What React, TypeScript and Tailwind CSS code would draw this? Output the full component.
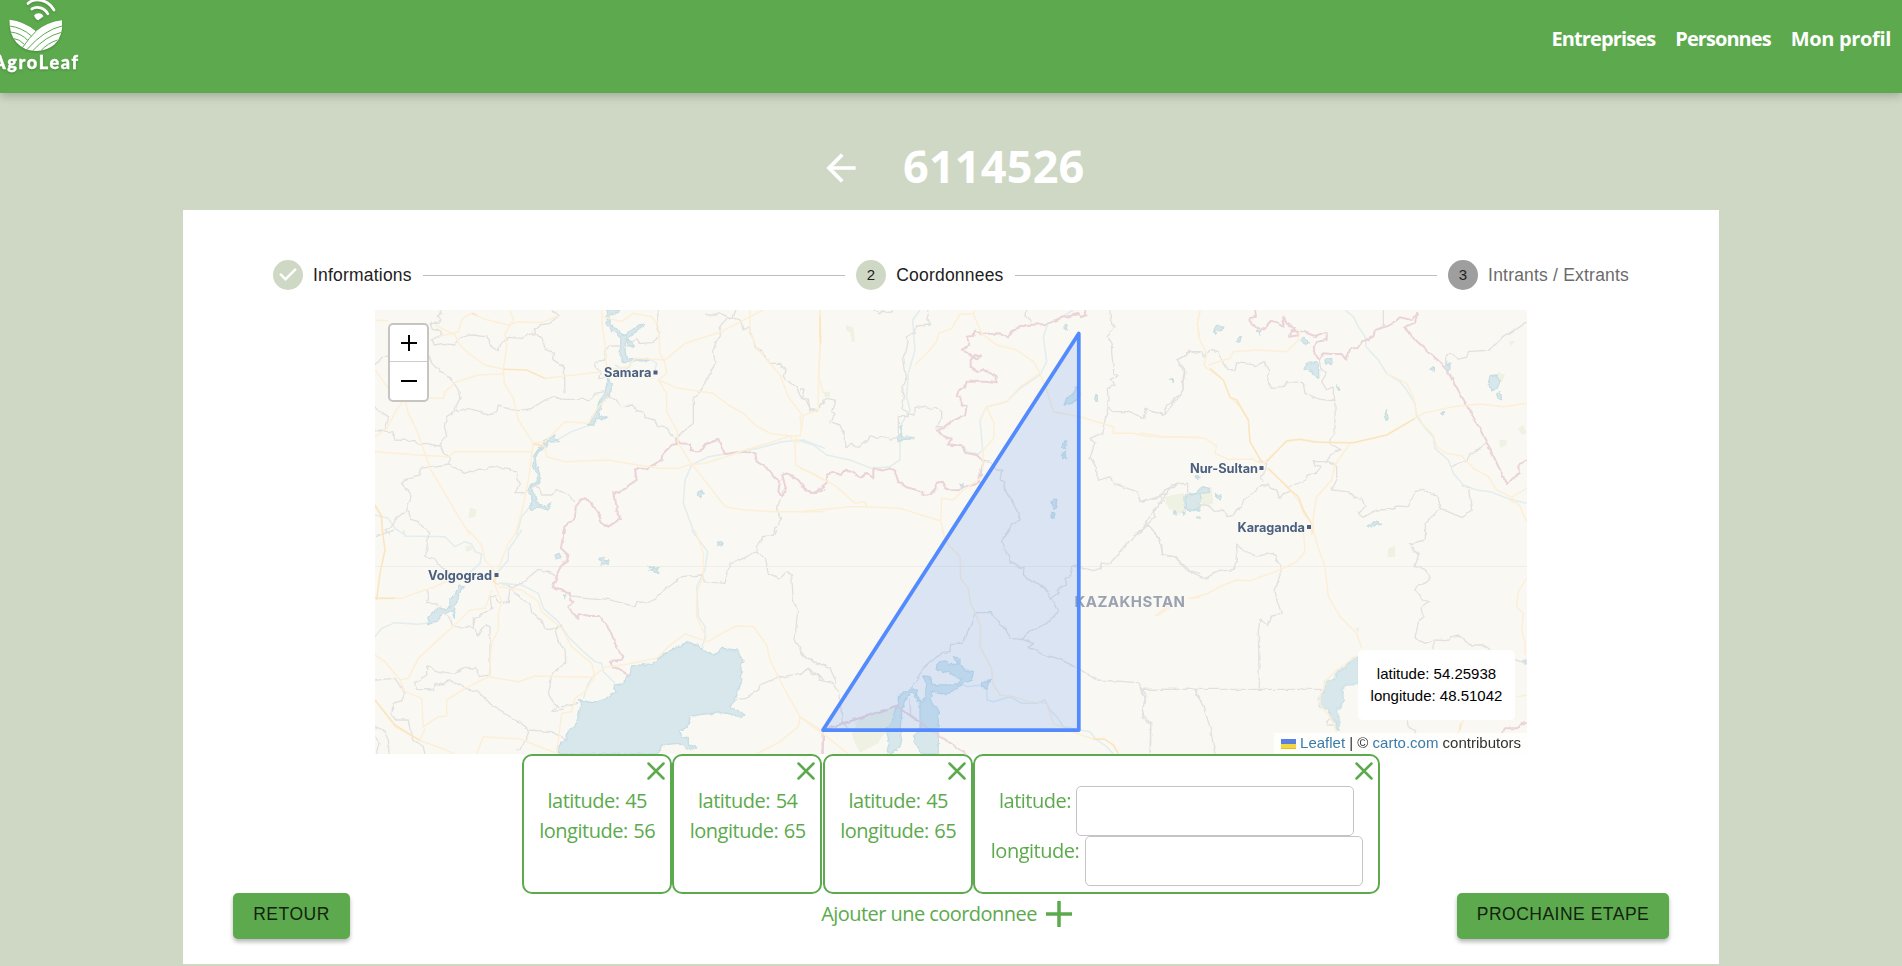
import React from "react";

const ui = "font-['Open_Sans','Noto_Sans',sans-serif]";
const arial = "font-['Liberation_Sans',Arial,sans-serif]";

type Tile = { at: string; borders?: string[]; frontiers?: string[]; roads?: string[]; majors?: string[]; rivers?: string[]; water?: string[]; parks?: string[] };

const tiles: Tile[] = [
  {
    at: "translate(0 0) scale(.33333)",
    borders: [
      "M200 0L190 18 198 30 192 40 165 40 172 58 190 62 200 75 172 90 178 105 205 100 235 105 250 85 278 78 285 72 310 78 335 80 345 105 370 122 380 100 400 82 440 85 465 72 484 72 478 60 495 45 525 40 550 18 530 0",
      "M484 72L502 88 510 118 535 128 533 148 568 172 570 250",
      "M0 165L20 140 45 138M160 140L180 170 228 205 250 240 255 265 240 295 248 305 270 300 280 295 340 312 365 305 370 285 405 298 430 302 470 295 510 270 540 258 570 268 620 268 650 268 660 250 690 245 700 262 720 265 740 290 770 288 785 300 808 308 810 322 840 330 848 350 880 355 895 380",
      "M245 300L215 320 208 350 215 375 195 405 205 430 225 445 225 462 265 490 290 482 330 480 345 470 400 475 425 485 428 505 435 520 420 548 450 548",
      "M0 290L10 305 40 325 30 360 0 362 50 365 60 390 115 392 130 402 155 400 175 405 195 408",
      "M225 462L165 470 140 475 135 495 105 502 80 522 100 540 108 560 95 600 110 628 130 635 165 675M95 600L65 625 50 650 30 660 45 675",
      "M850 0L845 45 855 70 835 98 795 100 785 85 760 108 705 108 690 125 690 150 660 155 665 175 675 185 672 205 690 205 700 180",
      "M995 15L1025 15 1035 10 1070 25 1080 0M1060 20L1095 30 1105 60 1125 50 1125 70 1145 110 1185 160 1215 160 1230 180 1225 200 1265 235 1280 265 1295 272 1305 300 1330 300 1335 285 1350 275",
      "M1060 20L1035 50 1040 70 1025 90 1015 120 1020 160 1000 200 985 235 955 265 955 340 925 365 905 385",
      "M450 548L480 525 495 540 500 555 530 555 545 538 580 555 600 575M1225 540L1215 570 1205 600 1220 625 1200 655 1195 675",
    ],
    frontiers: ["M565 675L568 650 600 625 602 590 620 568 635 565 665 600 680 635 700 650 738 625 725 600 718 545 730 548 770 520 785 510 780 478 815 475 862 450 865 430 890 405 905 402 903 385 912 400 945 402 945 420 975 425 990 402 1030 390 1050 432 1075 428 1110 425 1140 430 1145 455 1185 480 1195 500 1215 510 1210 545 1220 555 1235 545 1222 495 1235 490 1270 510 1285 530 1320 552 1350 535"],
    roads: [
      "M0 30L40 32M180 45L240 75 255 105 280 130 330 165 385 178", "M190 80L250 65 262 25 290 10 330 28 400 45 430 35 500 38 550 18",
      "M405 0L415 30 390 70 395 110 385 178 388 220 415 265 430 330 475 400 510 410 515 440 570 455 700 450 770 462 850 475 910 475 940 465 990 460 1070 435 1110 420 1180 400 1245 378",
      "M165 265L205 265 210 245 245 215 310 195 385 192M510 205L600 195 680 185", "M90 270L70 290 35 355 0 380M90 270L100 310 125 360 150 430 165 475 210 550 250 620 285 675",
      "M0 425L60 430 130 435 220 440 240 425 470 425M475 400L462 500 442 600 420 675", "M475 400L510 395 570 335 640 340 670 290 700 260",
      "M680 0L682 50 690 100 695 180M685 20L740 35 775 10 830 20 850 50 855 130 870 160 875 190 850 210 875 250 875 305 905 360 910 400 945 455 1000 525 1050 590 1110 600 1200 605 1350 605",
      "M695 180L760 170 780 145 870 150 930 100 1040 65 1115 25 1165 0", "M850 210L910 235 1015 250 1060 285 1105 310 1140 345 1185 370 1245 378 1275 378 1285 320 1240 260 1215 195 1145 115 1125 60 1125 0", "M1335 0L1335 90 1332 200 1345 250M1245 378L1255 395 1275 395 1260 385 1262 465 1350 512",
      "M0 180L40 235M0 590L20 620 22 675",
    ],
    majors: ["M385 178L455 180 510 205", "M1335 0L1335 80", "M0 585L18 615 24 675M475 402L510 408M290 10L305 15"],
    rivers: ["M545 390L590 365 645 345", "M490 580L465 590 440 620 425 675", "M950 465L1000 440 1075 428 1150 415 1220 395 1285 390 1350 415", "M950 465L930 510 925 580 940 620 960 675", "M770 150L830 150 845 160 840 180M0 615L40 625 60 655 90 675", "M720 165L745 180 765 170 768 150"],
    water: [
      "M698 0H735L722 12 706 10 705 40 745 78 800 40 808 44 752 88 770 95 778 112 765 108 752 90 750 125 755 145 822 148 820 152 745 155 735 140 738 85 696 45Z",
      "M700 205L713 228 695 270 680 275 672 315 698 326 665 325 655 345 640 345 665 300 675 270 692 240Z",
      "M510 390L530 380 540 375 540 388 553 392 520 393 512 410 490 425 480 445 485 470 494 490 494 520 465 530 480 560 485 580 515 590 525 578 526 590 518 600 490 590 468 600 462 590 476 575 460 540 466 525 490 515 485 490 475 475 475 440 488 420 508 405Z",
      "M968 548L978 542 985 552 978 564 968 560Z",
    ],
    parks: ["M285 592L305 600 300 620 280 625Z"],
  },
  {
    at: "translate(0 220) scale(.33333)",
    borders: [
      "M165 0L160 20 152 80 180 85 190 105 210 120 205 140M155 175L160 190 155 220 190 222 192 235 225 265 235 290 290 292 305 300 308 318 330 285 345 290 345 435",
      "M0 450L60 445 90 490 80 512 55 520 50 550 65 570 100 570 105 598 115 610 115 630 145 650 150 675M0 590L25 600 40 630 42 672M5 675L15 640 0 620M0 20L60 0",
      "M118 458L125 478 178 480 180 460 205 465 225 448 270 475 310 485 350 525 460 595 460 610 440 655 425 660M460 600L530 605 570 628",
      "M345 435L310 440 305 412 290 418 270 410 235 430 195 425 155 410 155 435 120 458", "M295 262L295 290 300 265 350 235 345 200 360 200 370 218 400 215 405 175 440 160 490 118 520 125 545 140",
      "M400 165L420 190 465 225 470 245 500 270 510 295 525 302 560 285 540 300 555 350 570 355 572 400 530 430 525 470 520 490 535 520 550 530 530 545 565 540 560 530 610 520", "M585 198L700 208 780 230 785 218 830 215 860 188 920 140 980 135 985 155 1050 160 1065 100 1075 98 1145 68 1150 40 1165 20 1200 15 1205 0M1145 68L1170 80 1180 130 1215 145 1235 125 1250 135 1255 210 1268 240 1260 325 1280 370 1320 400 1350 408", "M1080 510L1110 505 1150 480 1155 465 1200 445 1275 430 1300 415 1350 450",
      "M1343 600L1343 672",
    ],
    frontiers: ["M566 0L558 55 580 75 575 95 558 105 545 140 533 170 585 192 583 205 595 215 580 230 590 250 608 265 612 250 640 258 675 258 705 300 722 345 745 380 740 390 705 392 715 410 765 438", "M1343 600L1343 675"],
    roads: [
      "M0 205L80 205 120 190 180 170 225 150", "M280 0L320 45 330 90 365 130M430 0L400 40 365 130", "M365 130L360 165 380 215 370 250 370 300 350 340 342 440 430 455 480 438 560 440 650 442 690 412 760 402 845 385 880 350 930 312 1000 335 1040 310 1085 288 1135 290 1175 345 1185 390 1230 480 1275 560 1345 605",
      "M350 180L330 235 285 240 240 285 200 320 130 385 100 445 75 450M370 170L440 180 490 215 500 245 560 295 590 350 650 400 660 440 630 485 600 505 590 545 560 550 545 672", "M0 375L30 395 75 450 90 485 140 505 145 590 190 560 215 558 215 510 270 475 340 440M0 510L60 590 135 632 200 655 240 672M135 632L150 595M305 672L325 620 400 625 440 628 480 645 540 668", "M960 0L985 70 985 140 965 190 965 260 995 325M1275 560L1270 590 1215 635 1145 672",
    ],
    majors: ["M22 0L30 60 15 130 5 210M365 130L355 155 370 165", "M0 510L60 585 135 632", "M0 205L60 205"],
    rivers: ["M85 0L90 18 210 20 240 50 270 35 290 42 300 65 320 72 315 100 265 145", "M0 320L20 295 60 278 130 283 165 278", "M370 160L440 165 490 190 505 235 550 275 580 320 620 360 660 395 680 400 685 425 720 460", "M440 0L400 60 400 90 370 125M660 430L640 460 625 505M950 0L998 65 990 120 965 170 970 260 990 290 990 330 980 350"],
    water: [
      "M250 165L268 170 245 200 250 210 240 225 238 265 232 240 195 258 190 272 158 284 162 262 188 232 215 240 225 228 225 205 240 198Z",
      "M540 75L552 70 558 82 545 87Z", "M672 85L685 85 688 92 702 92 700 100 680 102Z", "M822 110L840 115 852 112 845 120 852 130 825 122 835 118Z", "M1028 32L1045 40 1042 46 1030 42Z", "M563 195L572 198 568 206Z",
      "M550 672L550 650 575 625 580 600 600 590 612 550 620 520 610 508 650 518 690 508 720 485 715 465 740 462 765 435 770 408 830 402 870 370 900 355 935 338 975 348 985 362 1018 375 1040 355 1085 360 1105 395 1098 410 1100 450 1085 500 1065 530 1110 555 1100 562 1050 548 985 552 945 560 940 590 915 602 920 620 940 625 940 645 965 652 950 660 930 650 910 640 860 645 850 672Z",
    ],
    parks: ["M270 50L290 45 292 60 275 65Z", "M375 155L405 158 405 170 385 168Z"],
  },
  {
    at: "translate(425 0) scale(.33333)",
    borders: [
      "M220 0L240 12 250 0 275 10 280 0M385 0L380 20 390 45 350 48 345 70 318 82 325 90 318 125 310 140 320 210 305 240 312 265 305 300 325 310 325 320 295 320 295 385 268 390 265 380 230 385 210 375 205 390 180 412 165 410 155 400 135 410 132 375 120 345 90 335 105 315 95 305 105 270 78 265 60 285 55 300 30 302 25 268 8 262 15 240 0 240",
      "M325 310L345 315 345 292 370 290 395 298 405 290 425 305 425 325 410 350 430 350", "M680 0L678 20 695 35M930 0L932 40 945 50 922 80 935 105 935 130 942 190 955 198 930 208 945 225 922 235 925 290 940 305 985 305 1030 325 1035 298 1090 315 1115 290 1120 270 1150 240 1148 210 1155 180 1135 150 1160 135 1160 125 1200 125", "M925 290L905 370 870 385 885 400 870 440 890 475 892 512 930 500 940 520 1010 545 1020 575 1100 550 1115 525 1160 520M1100 550L1060 605 1065 620 1010 675M1040 635L1065 675",
      "M550 450L575 455 590 480 605 480 600 510 615 515 610 535 640 575 660 630 640 640 615 675",
    ],
    frontiers: ["M0 528L40 552 80 518 82 495 100 488 125 495 135 482 160 485 180 505 200 488 220 505 220 475 250 482 270 475 285 485 295 515 320 532 370 545 370 558 390 555 410 535 410 518 425 515 440 538 475 538 520 525 535 520 540 500 550 455 530 435 495 428 485 408 455 408 445 400 455 388 420 370 412 358 430 355 460 332 495 315 500 290 485 285 485 265 470 258 475 245 495 230 500 215 560 215 590 220 590 200 550 178 535 185 512 170 512 150 525 135 545 140 530 148 495 125 485 122 510 100 500 80 520 78 525 62 550 72 600 70 625 82 635 60 680 45 740 42 780 25 835 12 842 22 860 15 855 0"],
    roads: ["M60 0L62 90 55 200 55 300 0 320 5 360", "M525 0L520 12 480 12 455 55 415 70 410 95 380 130 345 165", "M520 12L545 70 590 105 650 120 700 155 720 190 660 230 620 275 560 290 540 330M560 290L582 340 582 385 550 420 548 480", "M720 190L740 240 760 305 840 320 940 350 940 370 1000 370 1050 380 1200 382", "M0 475L40 490 110 530 165 580 195 575 200 590 150 590 0 605M200 590L300 595 420 632M548 500L490 540 460 570 425 565 422 632M1200 5L1192 40 1200 80M422 632L432 675"],
    majors: ["M60 20L62 100"],
    rivers: ["M360 0L338 30 345 120 325 190 320 260 330 300 305 340 300 400 300 450 270 470 215 475 150 450 80 435 40 405 0 392", "M745 35L730 80 740 155 720 195 660 235 620 275 560 290 540 330 548 420 535 432 500 425 490 410M820 0L790 18 745 40"],
    water: ["M303 345L305 380 342 383 340 387 310 388 295 395 292 378 302 375Z", "M795 45L800 42 802 60 796 62Z", "M835 225L838 260 815 280 792 285 800 265 815 258Z", "M885 262L892 256 892 275 884 276Z", "M1110 208L1120 210 1120 216Z", "M790 395L797 393 798 415 785 415Z", "M785 435L795 422 797 445 788 445Z", "M480 522L488 518 490 528 484 532Z", "M758 568L770 568 768 590 762 598 757 585ZM757 605L766 605 762 625 756 622Z", "M1158 555L1200 548V600L1160 600 1155 580ZM1120 602L1130 605 1128 615ZM538 495L548 494 545 502Z"],
    parks: ["M138 45L160 52 165 95 155 95 152 70 138 60Z", "M70 245H90V262H75Z", "M1115 555L1160 552 1158 595 1130 605 1095 580Z"],
  },
  {
    at: "translate(425 220) scale(.33333)",
    borders: [
      "M630 0L618 15 608 35 615 60 625 75 635 100 660 115 672 110 670 135 690 148 730 170 755 205 775 240 770 250 740 280 690 305 660 330M755 205L775 190 775 175 800 165 795 145 812 140 818 108 850 115 880 122 900 115 905 100 930 98 965 65 990 30 1020 0M1055 0L1070 20 1085 45 1088 75 1125 80 1170 122 1200 130",
      "M0 435L25 415 35 430 55 435 60 450 100 460 115 485 128 570M0 365L40 398 90 415 110 460", "M128 570L145 600M330 480L370 415 425 368 450 365 452 340 490 340 525 248 575 248 600 285 612 290 632 325 665 328 700 340 688 350 725 372 780 388 835 415 890 450 1018 458 1025 490 1035 505 1025 560 1052 585 1050 672M1022 478H1200M1188 480L1200 505M330 510L332 555",
    ],
    frontiers: ["M70 600L290 528 362 578 415 615 500 672M68 600V672"],
    roads: ["M425 0L445 45 480 80 482 145 505 175 512 220 525 248 542 290 540 350 575 415 578 460 600 495 640 500 690 515 740 520 760 580 835 612 885 628 910 625 940 645 955 672", "M0 562L68 610 145 672M1070 258L1110 232M1165 205L1200 202"],
    majors: ["M880 628L915 628 940 645 955 670"],
    rivers: ["M480 458L500 470 545 465 560 480 562 510 580 515 630 500 665 520 710 520 735 510 750 540 770 560 790 590 870 605 890 630 920 650 940 672"],
    water: [
      "M410 405L420 395 440 392 445 405 475 402 465 388 460 380 480 385 480 405 495 420 520 425 515 450 485 462 470 468 475 470 450 488 430 492 395 485 390 510 400 530 415 535 415 672H365L342 635 345 615 360 600 360 515 350 510 345 490 330 490 315 510 305 545 300 600 305 630 300 650 270 670 262 660 268 640 260 600 275 580 285 540 295 520 295 500 312 485 330 480 352 480 350 500 365 515 375 505 380 460 368 438 390 440 392 462 415 465 450 465 475 460 485 450 470 440 450 430 440 425 430 428 412 418Z",
      "M545 462L560 452 575 448 560 460 562 478 545 470Z",
    ],
    parks: ["M165 575L290 530 275 580 260 605 245 620 235 640 180 668 165 640 155 610 168 600Z"],
  },
  {
    at: "translate(765 0) scale(.33333)",
    borders: [
      "M0 325L15 320 15 298 70 315 80 285 110 270 130 240 128 215 135 190 112 150 140 135 145 120 165 130 185 125 195 142 210 118 235 125 245 145 250 165 265 178 285 180 290 155 335 160 345 170 375 158 390 185 382 212 395 232 430 230 440 215 490 218 495 250 540 268 575 272 585 270 585 370 570 390 572 405 605 418 575 430 560 455 520 455 525 465 545 470 530 490 500 495 500 510 450 530 450 545 430 550 420 565 410 540 395 535 385 525 365 525 335 555 310 570 305 595 285 600 280 615 260 620 250 600 225 605 195 585 175 585 150 560M0 575L65 560 70 545 120 520 140 520 140 555 175 580",
      "M540 150L545 175 560 190 545 215 560 240 580 230 580 270M730 0V50M1160 35L1085 85 1050 120 985 125 980 142 955 148 935 132 920 135 920 170M1040 395L1020 420 990 430 985 450 935 470M560 455L590 470 590 510 575 540 625 545 640 560 665 565 675 590 655 612 670 622 710 600 750 598 770 588 805 590 825 545 850 538 870 550 890 555 900 595 965 622 995 600 985 535 965 530M900 600L855 635 858 675M0 672L40 600 75 570M20 640L45 675",
      "M355 455L380 460 375 490 360 500 370 515",
    ],
    frontiers: ["M345 0L348 20 330 25 335 45 355 55 380 55 385 35 405 38 420 45 430 50 430 20 440 40 455 50 470 60 475 75 450 80 455 60 480 62 525 78 560 65 560 90 530 95 520 130 540 150 550 130 575 132 605 132 618 150 630 118 655 110 665 98 700 80 705 62 760 40 780 22 815 30 832 8 825 38 795 50 810 75 915 170 980 285 1040 395 1100 522 1115 505 1140 492 1138 468 1160 450"],
    roads: ["M180 0L172 40 175 80 200 130 192 170M205 165L270 145 280 125 350 120 440 125 475 90 480 60", "M195 170L250 210 270 260 300 290 325 330 330 395 355 440 365 460M0 368L80 382 110 380 195 385 230 408 225 430 265 448 340 448 360 460", "M370 460L440 395 480 388 560 398 640 398 740 375 825 325 850 310 940 290 1020 282 1090 290 1160 280M630 400L585 465 575 510 530 560 520 620 520 675M380 475L440 525 480 580 490 610 515 640 515 675", "M740 190L800 220 820 260 830 310 850 345 880 375 890 410 920 430 965 438 1000 475 1045 500 1070 540 1115 562 1160 535M1115 562L1140 590 1160 635M1110 570L1125 580"],
    majors: ["M210 175L250 210 270 262 290 270 325 330 330 395 365 455", "M380 455L440 392 480 388 520 396 640 398 740 375 825 325", "M385 475L450 540 475 560 490 600 515 640"],
    rivers: ["M615 0L640 20 655 50 675 80 678 110 715 150 740 190 780 215 800 240 825 280 830 320 860 360 880 380 885 415 925 450 940 490 970 525 1010 540 1050 545 1110 568 1160 580"],
    water: ["M222 60L230 45 248 52 245 62 232 62 226 70Z", "M292 98L296 80 303 80 300 95Z", "M350 62L364 60 360 72Z", "M485 88L492 82 505 98 500 104 488 98Z", "M555 150L575 145 575 160 558 162Z", "M492 178L502 160 530 158 536 165 536 205 520 195 512 180Z", "M590 225L600 240 592 240Z", "M733 320L740 302 744 325 738 328Z", "M870 178L880 170 885 180Z", "M918 165L930 162 930 178 920 178Z", "M1045 220L1050 198 1068 195 1080 215 1070 238 1055 240Z", "M1070 252L1080 245 1085 265 1075 268Z", "M902 310L910 308 910 316Z", "M90 208L100 210 98 216Z", "M165 498L180 502 170 506Z", "M135 560L170 550 185 530 208 535 205 548 180 550 185 570 178 590 160 602 138 600ZM225 550L240 558 242 570 230 562ZM102 602L112 612 102 612ZM128 602L135 612 128 612ZM172 622L182 626Z", "M685 648L705 635 722 643 705 645 692 652Z"],
    parks: ["M75 560L130 550 140 600 120 612 85 595Z", "M185 545L215 530 220 580 185 590Z", "M1075 185L1095 195 1085 218 1070 205Z", "M1105 95L1125 92 1115 108Z", "M1135 355L1150 345 1160 370 1145 375Z", "M1078 390L1100 390 1100 405 1080 415Z"],
  },
  {
    at: "translate(765 220) scale(.33333)",
    borders: [
      "M35 0L60 30 68 75 105 80 140 120 195 145 235 125 280 118 292 85 290 45 310 60 335 72 350 78 400 70 420 110 420 135 405 180 410 210 425 250 395 255 385 285 360 270 355 305 358 478M0 478H560M165 480L190 530 210 590 225 672M0 470L18 500 5 550 32 580 32 672",
      "M858 0L855 30 808 42 835 75 825 110 860 120 870 145 850 162 835 165 828 180 850 210 865 218 842 235 852 260 835 280 825 322 855 340 880 330 920 332 935 320 955 315 990 345 1035 345 1050 360 1090 378 1160 400M882 330V360M575 560L560 575 565 585 580 585M800 570L805 590 825 600 830 625",
    ],
    frontiers: ["M1085 612L1095 595 1130 595 1160 578"],
    roads: ["M490 0L495 65 470 95 420 120 330 152 290 150 240 170 200 192 150 205M110 215L80 230 45 258M520 0L530 40 555 110 565 200 600 260 650 310 665 355M655 375L590 420 560 450 540 500 540 525 570 560 590 605M1160 145L1135 185 1130 230 1150 250 1145 300 1155 340 1155 375M1130 500L1160 495M970 570L950 620"],
    majors: ["M515 0L520 5M962 580L960 600"],
    rivers: [],
    water: ["M655 382L635 385 620 410 590 425 582 450 555 455 555 480 540 500 538 528 565 540 575 565 588 575 588 600 597 600 598 570 592 545 612 510 605 480 620 465 655 462Z", "M1148 392L1160 390V405Z"],
    parks: ["M745 55L765 48 765 80 742 82Z", "M645 295L658 292 655 308Z"],
  },
];

const cities: [string, number, number, number, number][] = [
  ["Samara", 229, 67, 47.5, 280.5],
  ["Volgograd", 53, 269.5, 64, 121.5],
  ["Nur-Sultan", 815, 162.5, 68, 886.5],
  ["Karaganda", 862.5, 221.5, 67.5, 934],
];

function MapCanvas() {
  const draw = (list: string[] | undefined, cls: string) => list?.map((d, i) => <path key={cls + i} d={d} className={cls} />);
  return (
    <svg width="1152" height="444" viewBox="0 0 1152 444" className="block">
      <defs>
        <filter id="rough" x="0" y="0" width="1152" height="444" filterUnits="userSpaceOnUse" colorInterpolationFilters="sRGB">
          <feTurbulence type="fractalNoise" baseFrequency=".12" numOctaves="2" seed="4" />
          <feDisplacementMap in="SourceGraphic" scale="4" xChannelSelector="R" yChannelSelector="G" />
        </filter>
        <filter id="coast" x="0" y="0" width="1152" height="444" filterUnits="userSpaceOnUse" colorInterpolationFilters="sRGB">
          <feTurbulence type="fractalNoise" baseFrequency=".2" numOctaves="2" seed="8" />
          <feDisplacementMap in="SourceGraphic" scale="4" xChannelSelector="R" yChannelSelector="G" />
        </filter>
      </defs>
      <rect width="1152" height="444" fill="#faf8f3" />
      <path d="M0 256.5H1152" stroke="#f0eeea" />
      <g fill="none" strokeLinejoin="round">
        {tiles.map((t) => <g key={t.at} transform={t.at}>{draw(t.parks, "fill-[#eff1e3] stroke-none")}</g>)}
        {tiles.map((t) => <g key={t.at} transform={t.at}>{draw(t.rivers, "stroke-[#e1edee] stroke-[4.5px]")}</g>)}
        <g filter="url(#coast)">
          {tiles.map((t) => <g key={t.at} transform={t.at}>{draw(t.water, "fill-[#d7e7eb] stroke-[#c8dee3] stroke-[4px]")}</g>)}
        </g>
        <g filter="url(#rough)">
          {tiles.map((t) => <g key={t.at} transform={t.at}>{draw(t.borders, "stroke-[#e3e1e0] stroke-[4px]")}</g>)}
          {tiles.map((t) => <g key={t.at} transform={t.at}>{draw(t.frontiers, "stroke-[#ead4d8] stroke-[6px]")}</g>)}
        </g>
        {tiles.map((t) => (
          <g key={t.at} transform={t.at}>
            {draw(t.roads, "stroke-[#fcefd8] stroke-[4.5px]")}
            {draw(t.majors, "stroke-[#fae5bf] stroke-[4.5px]")}
          </g>
        ))}
      </g>
      <g className="font-['Inter','Liberation_Sans',sans-serif] font-bold" fill="#4b6080" stroke="#faf8f3" strokeWidth="2" paintOrder="stroke">
        {cities.map(([name, x, y, w, dot]) => (
          <g key={name}>
            <text x={x} y={y} fontSize="12.8" textLength={w}>{name}</text>
            <rect x={dot - 2} y={y - 6.5} width="4" height="4" stroke="none" />
          </g>
        ))}
        <text x="699.5" y="297" fontSize="15" textLength="110.5" fill="#99a2b1">KAZAKHSTAN</text>
      </g>
      <path d="M703.8 23.5V420H448Z" fill="#3a80f5" fillOpacity=".17" stroke="#538bff" strokeWidth="3.75" strokeLinejoin="round" />
    </svg>
  );
}

function Logo() {
  return (
    <svg width="90" height="80" viewBox="0 0 90 80" className="block drop-shadow-[0_1px_1px_rgba(0,0,0,0.2)]">
      <g fill="none" stroke="#fff" strokeWidth="2.7" strokeLinecap="round">
        <path d="M28 3.5C35-3 48-.5 54 10" />
        <path d="M31.8 9C37 5.800 44.500 7.500 47.800 13.800" />
      </g>
      <path d="M34 15.500C37 12 42.500 13 43.300 16.500L38.300 20.300Q35.500 19.500 34 15.500Z" fill="#fff" />
      <path d="M9.500 19.800Q24 21.500 36 31.200 47 22 62 20.200 63.500 36 54.500 44.500 46 51.500 35 51 24 50.500 16.500 42.500 9 34 9.500 19.800Z" fill="#fff" />
      <g fill="none" stroke="#5caa4d" strokeWidth="1">
        <path d="M36 31.200Q29 38 22.500 47.500" />
        <path d="M9.500 26Q22 27.500 31.500 36M10.500 32Q21 33 28 40.500M13.500 38.500Q19.500 39 24.500 44.500" />
        <path d="M62 26Q44 30 27 49.500M61 32.500Q46 36 32.500 51M57.500 40Q48 43 41 50.500" />
      </g>
      <text x="-7" y="69" fontSize="18" textLength="85" fill="#fff" stroke="#fff" strokeWidth=".4" className="font-['Lato',sans-serif] font-black">AgroLeaf</text>
    </svg>
  );
}

function Cross() {
  return (
    <svg viewBox="0 0 18 18" className="absolute right-[5px] top-[6px] size-[18px]" fill="none" stroke="#5caa4d" strokeWidth="2.5" strokeLinecap="round">
      <path d="M1.500 1.500 16.500 16.500M16.500 1.500 1.500 16.500" />
    </svg>
  );
}

function Step({ n, label, state }: { n: number; label: string; state: "done" | "active" | "todo" }) {
  return (
    <div className="flex items-center gap-[10px]">
      <svg width="30" height="30" viewBox="0 0 24 24">
        <circle cx="12" cy="12" r="12" fill={state === "todo" ? "#9e9e9e" : "#cfd8c5"} />
        {state === "done" ? (
          <path d="M10 17l-5-5 1.400-1.400 3.600 3.600 7.600-7.600L19 8l-9 9z" fill="#fff" transform="translate(0 -.2)" />
        ) : (
          <text x="12" y="16.300" textAnchor="middle" fontSize="12" fill="#222">{n}</text>
        )}
      </svg>
      <span className={state === "todo" ? "text-[#6b6b6b]" : "text-[#212121]"}>{label}</span>
    </div>
  );
}

const points = [
  { lat: 45, lng: 56 },
  { lat: 54, lng: 65 },
  { lat: 45, lng: 65 },
];

export default function App() {
  return (
    <div className={`flex h-[966px] w-[1902px] flex-col overflow-hidden bg-[#cfd8c5] ${ui}`}>
      <header className="z-10 flex h-[93px] shrink-0 justify-between bg-[#5caa4d] shadow-[0_3px_9px_rgba(0,0,0,0.22)]">
        <Logo />
        <nav className="flex gap-[20px] pr-[11px] pt-[24px] text-[20px] font-bold leading-[30px] text-white">
          <a className="tracking-[-0.88px]">Entreprises</a>
          <a className="tracking-[-0.93px]">Personnes</a>
          <a className="tracking-[-0.34px]">Mon profil</a>
        </nav>
      </header>
      <div className="flex h-[117px] shrink-0 items-center pl-[819px] text-white">
        <svg width="44" height="44" viewBox="0 0 24 24" fill="currentColor" className="mt-[32px]">
          <path d="M20 11H7.830l5.590-5.590L12 4l-8 8 8 8 1.410-1.410L7.830 13H20v-2z" />
        </svg>
        <h1 className="ml-[40px] mt-[28px] text-[45px] font-bold leading-[60px] tracking-[0.2px]">6114526</h1>
      </div>
      <main className="mx-[183px] flex h-[754px] shrink-0 flex-col items-center bg-white">
        <div className={`flex h-[100px] w-full shrink-0 items-center gap-[11px] pl-[90px] pr-[90px] pt-[30px] text-[17.5px] tracking-[0.2px] ${arial}`}>
          <Step n={1} label="Informations" state="done" />
          <div className="mt-px h-px flex-1 bg-[#bdbdbd]" />
          <Step n={2} label="Coordonnees" state="active" />
          <div className="mt-px h-px flex-1 bg-[#bdbdbd]" />
          <Step n={3} label="Intrants / Extrants" state="todo" />
        </div>
        <section className={`relative h-[444px] w-[1152px] shrink-0 ${arial}`}>
          <MapCanvas />
          <div className="absolute left-[13px] top-[13px] flex h-[79px] w-[41px] flex-col rounded-[5px] border-2 border-[#c6c5c2] bg-white">
            <button className="flex h-[37px] items-center justify-center border-b border-[#ccc]">
              <svg width="16" height="16" viewBox="0 0 16 16" stroke="#000" strokeWidth="2"><path d="M0 8H16M8 0V16" /></svg>
            </button>
            <button className="flex h-[37px] items-center justify-center">
              <svg width="16" height="16" viewBox="0 0 16 16" stroke="#000" strokeWidth="2"><path d="M0 8H16" /></svg>
            </button>
          </div>
          <div className="absolute bottom-[34px] right-[12px] flex h-[70px] w-[157px] flex-col items-center justify-center rounded-[5px] bg-white text-[15px] leading-[22px] text-black">
            <span>latitude: 54.25938</span>
            <span>longitude: 48.51042</span>
          </div>
          <div className="absolute bottom-0 right-0 flex h-[21px] items-center whitespace-pre bg-white/80 pl-[7px] pr-[6px] text-[15px] text-[#333]">
            <svg width="15" height="10" viewBox="0 0 15 10" className="mr-[4px]">
              <path d="M0 0h15v5H0z" fill="#5b80e0" />
              <path d="M0 5h15v5H0z" fill="#f5d63b" />
              <path d="M0 9h15v1H0z" fill="#dfbd33" />
            </svg>
            <a className="text-[#3c7ba9]">Leaflet</a> | © <a className="text-[#3c7ba9]">carto.com</a> contributors
          </div>
        </section>
        <section className="flex h-[140px] shrink-0 text-[20px] leading-[30px] text-[#5caa4d]">
          {points.map((p, i) => (
            <div key={i} className="relative mr-[0.500px] flex w-[150px] flex-col items-center rounded-[10px] border-2 border-[#5caa4d] pl-px pt-[30px] tracking-[-0.5px] [word-spacing:1px]">
              <Cross />
              <span>latitude: {p.lat}</span>
              <span>longitude: {p.lng}</span>
            </div>
          ))}
          <div className="relative flex w-[407px] flex-col items-center rounded-[10px] border-2 border-[#5caa4d] pt-[30px] tracking-[-0.5px]">
            <Cross />
            {["latitude:", "longitude:"].map((l) => (
              <label key={l} className="flex h-[50px] gap-[5.500px]">
                {l}
                <input className="h-[50px] w-[278px] rounded-[5px] border border-[#c4c4c4] bg-white" />
              </label>
            ))}
          </div>
        </section>
        <div className="-mt-px flex w-full items-start justify-between px-[50px] text-[#5caa4d]">
          <button className={`h-[46px] w-[117px] rounded-[5px] bg-[#5caa4d] pb-[3px] text-[17.5px] tracking-[0.5px] text-[#12220f] shadow-[0_3px_4px_rgba(0,0,0,0.28)] ${arial}`}>RETOUR</button>
          <div className="ml-[86px] flex items-center gap-[9px] pt-[6px] text-[20px] leading-[30px] tracking-[-0.55px]">
            Ajouter une coordonnee
            <svg width="26" height="26" viewBox="0 0 26 26" stroke="#5caa4d" strokeWidth="3.500"><path d="M0 13H26M13 0V26" /></svg>
          </div>
          <button className={`h-[46px] w-[212px] rounded-[5px] bg-[#5caa4d] pb-[3px] text-[17.5px] tracking-[0.5px] text-[#12220f] shadow-[0_3px_4px_rgba(0,0,0,0.28)] ${arial}`}>PROCHAINE ETAPE</button>
        </div>
      </main>
    </div>
  );
}
